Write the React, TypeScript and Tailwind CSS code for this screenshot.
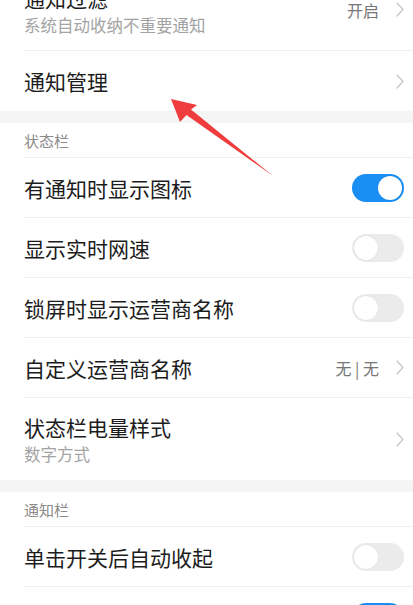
import React from 'react';

const FONT = { fontFamily: '"Noto Sans CJK SC", "Noto Sans", sans-serif' };

const Chevron: React.FC = () => (
  <svg width="8" height="15" viewBox="0 0 8 15" className="shrink-0">
    <path d="M1 1 L7 7.5 L1 14" fill="none" stroke="#c6c6c6" strokeWidth="1.2" strokeLinecap="round" strokeLinejoin="round" />
  </svg>
);

const Toggle: React.FC<{ on?: boolean }> = ({ on }) => (
  <div
    className={`w-[52px] h-[28px] rounded-full p-[2px] flex shrink-0 ${
      on ? 'bg-[#1a8ef2] justify-end' : 'bg-[#ebebeb] justify-start'
    }`}
  >
    <div className="w-[24px] h-[24px] rounded-full bg-white shadow-[0_0_1px_rgba(0,0,0,0.15)]" />
  </div>
);

interface RowProps {
  title?: string;
  sub?: string;
  value?: string;
  toggle?: boolean;
  on?: boolean;
  chevron?: boolean;
  divider?: boolean;
}

const Row: React.FC<RowProps> = ({ title, sub, value, toggle, on, chevron, divider = true }) => (
  <div className="pl-6">
    <div
      className={`flex items-center pr-[9px] ${sub ? 'h-[82px]' : 'h-[60px]'} ${
        divider ? 'border-b border-[#eeeeee]' : ''
      }`}
    >
      <div className="flex-1 min-w-0">
        {title && <div className="text-[21px] leading-[28px] text-[#1c1c1c]">{title}</div>}
        {sub && <div className="text-[16.5px] leading-[22px] text-[#a3a3a3] mt-[2px]">{sub}</div>}
      </div>
      {value && <span className="text-[16px] text-[#777777] mr-[17px]">{value}</span>}
      {toggle && <Toggle on={on} />}
      {chevron && <Chevron />}
    </div>
  </div>
);

const SectionHeader: React.FC<{ label: string }> = ({ label }) => (
  <>
    <div className="h-[12px] bg-[#f5f5f5]" />
    <div className="pl-6">
      <div className="h-[35px] flex items-center pt-[2px] border-b border-[#eeeeee] text-[15px] text-[#8a8a8a]">
        {label}
      </div>
    </div>
  </>
);

export default function App() {
  return (
    <div className="relative w-[413px] h-[605px] overflow-hidden bg-white" style={FONT}>
      <div className="-mt-[31px]">
        <Row title="通知过滤" sub="系统自动收纳不重要通知" value="开启" chevron />
        <Row title="通知管理" chevron divider={false} />

        <SectionHeader label="状态栏" />
        <Row title="有通知时显示图标" toggle on />
        <Row title="显示实时网速" toggle />
        <Row title="锁屏时显示运营商名称" toggle />
        <Row title="自定义运营商名称" value="无 | 无" chevron />
        <Row title="状态栏电量样式" sub="数字方式" chevron divider={false} />

        <SectionHeader label="通知栏" />
        <Row title="单击开关后自动收起" toggle />
        {/* next row is cut by the bottom edge; only its switch peeks in */}
        <Row toggle on />
      </div>

      {/* red annotation arrow */}
      <svg className="absolute inset-0 pointer-events-none" width="413" height="605" viewBox="0 0 413 605">
        <polygon
          points="171,99 197,105 191,109.5 273,176 186.5,115 180,122"
          fill="#ef3d3d"
        />
      </svg>
    </div>
  );
}
